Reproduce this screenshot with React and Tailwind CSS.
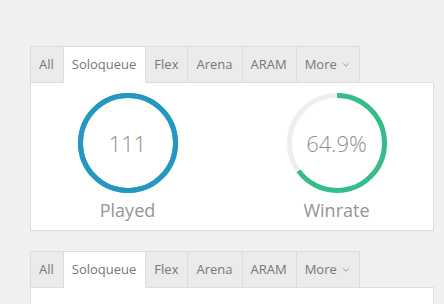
import { ChevronDown } from 'lucide-react'

const tabs = ["All", "Soloqueue", "Flex", "Arena", "ARAM"]

function Tabs({ active }) {
    return (
        <div className='flex h-[37px]'>
            {tabs.map((t, i) => (
                <div key={t}
                    className={`flex items-center pl-2 pr-[9px] border-t border-b border-r border-[#dddddd] text-[13px] text-[#777] ${i === 0 ? 'border-l' : ''} ${t === active ? 'bg-white border-b-white relative z-10' : 'bg-[#ebebeb]'}`}>
                    {t}
                </div>
            ))}
            <div className='flex items-center gap-1 pl-2 pr-[8px] border-t border-b border-r border-[#dddddd] bg-[#ebebeb] text-[13px] text-[#777]'>
                More
                <ChevronDown size={10} strokeWidth={2} className='text-[#888] mt-px' />
            </div>
        </div>
    )
}

function Ring({ pct, color, track, value, label }) {
    const r = 47.5
    const c = 2 * Math.PI * r
    return (
        <div className='w-1/2 flex flex-col items-center'>
            <div className='relative w-[100px] h-[100px]'>
                <svg width="100" height="100" viewBox="0 0 100 100" className='-rotate-90'>
                    <circle cx="50" cy="50" r={r} fill="none" stroke={track} strokeWidth="5" />
                    <circle cx="50" cy="50" r={r} fill="none" stroke={color} strokeWidth="5"
                        strokeDasharray={`${c * pct} ${c}`} />
                </svg>
                <div className='absolute inset-0 flex items-center justify-center text-[22px] font-light text-[#909090]'>{value}</div>
            </div>
            <div className='mt-[5px] text-[18px] leading-[24px] text-[#959595]'>{label}</div>
        </div>
    )
}

export default function App() {
    return (
        <main className='h-[304px] bg-[#f0f0f0] pt-[46px] pl-[30px] overflow-hidden' style={{ fontFamily: '"Open Sans", sans-serif' }}>
            <div className='w-[404px]'>
                <Tabs active="Soloqueue" />
                <div className='-mt-px bg-white border border-[#dddddd] h-[149px] pt-[10px]'>
                    <div className='flex -mx-[8px]'>
                        <Ring pct={1} color="#2399c0" track="#2399c0" value="111" label="Played" />
                        <Ring pct={0.649} color="#35bd89" track="#eeeeee" value="64.9%" label="Winrate" />
                    </div>
                </div>
                <div className='mt-[20px]'>
                    <Tabs active="Soloqueue" />
                    <div className='-mt-px bg-white border border-[#dddddd] h-[40px]'></div>
                </div>
            </div>
        </main>
    )
}
